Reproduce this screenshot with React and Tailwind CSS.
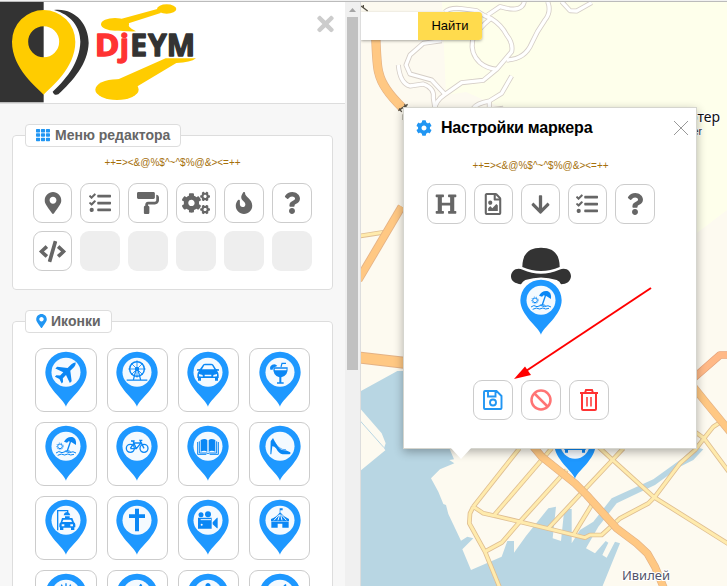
import React from "react";
import {
  FaMapMarkerAlt, FaTasks, FaPaintRoller, FaCogs, FaFire, FaQuestion, FaCode,
  FaHeading, FaRegFileImage, FaArrowDown, FaTh, FaCog, FaTimes,
} from "react-icons/fa";

const BLUE = "#1e98ff";
const ICON = "#0a87f5";

/* Glyphs are centred on 0,0; the pin head has an inner radius of 43 units. */
const glyphs = {
  plane: (
    <path transform="rotate(45) scale(.96)" d="M0-43Q5-39 6-30V-13L32 7V15L6 6V20L15 28V34L0 29L-15 34V28L-6 20V6L-32 15V7L-6-13V-30Q-5-39 0-43Z" />
  ),
  wheel: (
    <g fill="none" stroke={ICON} strokeWidth="3">
      <circle cy="-10" r="22" strokeWidth="4.5" />
      <circle cy="-10" r="5" fill={ICON} />
      <path d="M0-36V16M-26-10H26M-17-27L17 7M17-27L-17 7" strokeWidth="2.5" />
      <path d="M-4-4L-11 23M4-4L11 23M-31 23.500H31" strokeWidth="3.500" />
    </g>
  ),
  car: (
    <g>
      <path fillRule="evenodd" d="M-33-9L-24-10L-15-23Q-13-26-8-26H9Q14-26 16-23L24-10L33-9V-5H27Q32 0 32 8V17H30V25H21V17H-21V25H-30V17H-32V8Q-32 0-27-5H-33ZM-18-9H19L12-21H-11ZM-27 5V12L-16 13V8ZM27 5V12L16 13V8ZM-10 7V12H10V7Z" />
    </g>
  ),
  cocktail: (
    <g>
      <path fillRule="evenodd" d="M-20-15H23Q25 10 4 15V30H11V34H-9V30H-2V15Q-22 10-20-15ZM-16-11Q-16-7-15-6H19L20-11Z" />
      <path d="M3-16L6-27H18" fill="none" stroke={ICON} strokeWidth="3.500" />
      <path d="M-29-8A12 12 0 0 1-8-19L-17-15A7 7 0 0 0-22-8Z" />
    </g>
  ),
  beach: (
    <g>
      <path d="M-6-14Q2-30 19-28Q32-25 30-4L17-12L8-15L3-11Z" />
      <path d="M14-16L4 13" stroke={ICON} strokeWidth="4" />
      <circle cx="-18" r="7" fill="none" stroke={ICON} strokeWidth="3" />
      <circle cx="-18" r="10" fill="none" stroke={ICON} strokeWidth="2.500" strokeDasharray="3 4" />
      <path d="M-30 20Q-22 12-12 19Q0 12 10 19Q22 13 30 20M-25 27Q-14 20-4 26Q6 20 14 26L24 24" fill="none" stroke={ICON} strokeWidth="3" />
      <path d="M-6 15Q4 8 16 16Z" />
    </g>
  ),
  bike: (
    <g fill="none" stroke={ICON} strokeWidth="4">
      <circle cx="-20" cy="6" r="12" /><circle cx="21" cy="6" r="12" />
      <path d="M-20 6L-9-10H12L-2 7H-20M-2 7L-12-16M-18-16H-7M21 6L9-18H16" strokeWidth="4" />
    </g>
  ),
  book: (
    <g>
      <path d="M-22-19Q-8-25-2-18V17Q-10 10-22 16ZM22-19Q8-25 2-18V17Q10 10 22 16Z" />
      <path d="M-26-15V20H-3Q0 24 3 20H26V-15M-31-13V24H-5M31-13V24H5" fill="none" stroke={ICON} strokeWidth="3" />
    </g>
  ),
  shoe: (
    <g>
      <path d="M-28-15L-21-25Q-6 7 6 11Q20 11 31 18Q33 22 29 24H8Q-3 23-12 6Q-18-1-23 0L-26 24H-29Z" />
      <path d="M-17-14Q-7 6 7 9L18 10" fill="none" stroke={ICON} strokeWidth="2" />
    </g>
  ),
  wash: (
    <g>
      <path d="M-25 30V-29H5V-20" fill="none" stroke={ICON} strokeWidth="4" />
      <path d="M-7-15Q-5-25 4-25Q11-24 13-15ZM-3-12H11V-7H-3Z" />
      <path fillRule="evenodd" d="M-12-7H19L24 6Q28 8 28 13V21H25V29H15V22H-8V29H-18V21H-20V13Q-20 8-16 6ZM-8-2L-11 5H18L15-2ZM-13 12V18H-5V12ZM13 12V18H21V12Z" />
    </g>
  ),
  cross: <path d="M-6-35H6V-18H24V-7H6V33H-6V-7H-24V-18H-6Z" />,
  camera: (
    <g>
      <circle cx="-21" cy="-17" r="7.500" /><circle cy="-18" r="9" />
      <path d="M-30-8H11V25H-30ZM14 6L27-8H29V24H27L14 12Z" />
      <path d="M-22-2H9" stroke="#f4faff" strokeWidth="3" /><circle cx="-19" cy="13" r="3" fill="#f4faff" />
    </g>
  ),
  circus: (
    <g>
      <path d="M-1-36H8V-30H1V-25H-1Z" />
      <path d="M0-25Q10-11 27-4V3H-27V-4Q-9-10 0-25ZM-26 4H26V22H7V10H-7V22H-26Z" />
      <path d="M-3-17L-18 0M-1-17L-6 0M2-17L6 0M4-17L19 0" stroke="#f4faff" strokeWidth="3" />
    </g>
  ),
  sun: <g stroke={ICON} strokeWidth="4"><path d="M0-33V-18M-14-29L-8-17M14-29L8-17M-25-18L-16-10M25-18L16-10" /><circle r="12" /></g>,
  guitar: <path d="M10-32L16-28L7-12Q15 5-5 17Q-23 20-18 2L1-14Z" />,
  flower: <path d="M-8-28Q0-40 8-28L5-20L15-12L8 14H-8L-15-12L-5-20Z" />,
  rocket: <path d="M5-20L16-31L19-29L17-14L0 12L-15 5Z" />,
};

function Pin({ kind, className = "" }) {
  return (
    <svg className={`block h-[56px] w-[42px] shrink-0 ${className}`} viewBox="-63 -64 126 168">
      <path d="M0 103C-6 82-62 45-62 0A62 62 0 0 1 62 0C62 45 6 82 0 103Z" fill={BLUE} />
      <circle r="43.500" fill="#f4faff" />
      <g fill={ICON} color={ICON}>{glyphs[kind]}</g>
    </svg>
  );
}

function Tool({ children, className = "w-10" }) {
  return (
    <div className={`flex h-10 shrink-0 items-center justify-center rounded-[9px] border border-[#ccc] bg-white text-[#666] ${className}`}>
      {children}
    </div>
  );
}

function Logo() {
  return (
    <svg className="block h-[102px] w-[240px]" viewBox="0 5 720 306">
      <rect y="5" width="131" height="301" fill="#333" />
      <path fillRule="evenodd" fill="#ffcc00" d="M131 283C112 262 36 205 36 124A95 95 0 0 1 226 124C226 205 150 262 131 283ZM131 78A46.500 46.500 0 1 0 131 171A46.500 46.500 0 1 0 131 78Z" />
      <path fill="#333" d="M162 29C225 22 266 72 266 128C264 190 220 240 175 282Q162 287 158 274C205 230 239 183 241 124C241 80 213 43 162 29Z" />
      <g fill="#ffcc00">
        <ellipse cx="500" cy="26" rx="29" ry="14" />
        <ellipse cx="345" cy="72" rx="42" ry="19" />
        <path d="M365 55L480 24L482 38L386 69Q380 80 408 93Q370 94 340 88Z" />
        <ellipse cx="351" cy="268" rx="65" ry="31" />
        <path d="M350 239L497 174H588Q572 187 529 188L415 256L390 280Z" />
      </g>
      <g fontFamily="Open Sans, sans-serif" fontWeight="700" fontSize="90" strokeWidth="4" strokeLinejoin="round">
        <text x="284" y="166" fill="#ff3333" stroke="#ff3333" textLength="74" lengthAdjust="spacingAndGlyphs">D</text>
        <text x="359" y="166" fill="#ff3333" stroke="#ff3333">j</text>
        <text x="391 444 500" y="166" fill="#333" stroke="#333">EYM</text>
      </g>
    </svg>
  );
}

const whiteRoads = [
  "M300 36Q315 22 350 26L395 32Q420 50 438 55Q470 75 485 105Q505 130 500 155L455 208L415 241L350 248L300 283Q268 305 270 330",
  "M428 45L465 20Q530 40 538 5",
  "M608 5Q620 35 600 60Q575 95 560 130Q540 178 485 180",
  "M438 55Q400 85 383 120Q375 160 405 188Q425 205 455 208",
  "M290 122L235 130L195 165L183 195L195 222L260 240L300 283",
  "M160 195Q165 250 195 258L235 252Q270 265 265 295L270 325",
  "M500 228L470 280L433 303Q395 310 385 325M433 303V330L475 325",
  "M650 5L675 32L695 33L740 8",
];
const yellowRoads = [
  "M340 440L478 265", "M403 465L575 265", "M478 487L620 330", "M565 505L665 398L760 297L790 265", "M640 525L695 435",
  "M340 440L370 460L403 467L560 505L675 533L690 525L725 525L780 475L865 430L885 410L960 310L1005 270L1032 235L1060 200L1087 183",
  "M340 440L330 460L328 490L375 575L420 685", "M375 575L425 548L478 487", "M715 260L755 297L880 410L1110 555", "M1000 212L1032 235L1110 340",
  "M0 -372L70 -383",
];
const orangeRoads = [
  "M520 260L545 290L645 370L680 405L770 505L830 550L862 580L885 620L912 685",
  "M1000 80L1040 130L1110 215",
];

function CityMap() {
  return (
    <svg className="absolute inset-0 h-full w-full" viewBox="361 2 366 584">
      <rect x="361" y="2" width="366" height="584" fill="#fdfaf0" />
      <path d="M442 2H727V210L697 233H640V107H500L466 92L446 95Z" fill="#feffeb" />
      <g transform="translate(345 0) scale(.33333)" fill="none" strokeLinejoin="round">
        <g stroke="#d5cec7" strokeWidth="15">{whiteRoads.map((d) => <path key={d} d={d} />)}</g>
        <g stroke="#fff" strokeWidth="10">{whiteRoads.map((d) => <path key={d} d={d} />)}</g>
        <path d="M92 100Q95 200 102 220Q112 265 172 323" stroke="#e4b285" strokeWidth="28" />
        <path d="M92 100Q95 200 102 220Q112 265 172 323" stroke="#ffc883" strokeWidth="24" />
        <path d="M160 332L188 313M163 325L170 336M178 313L185 323M48 18L68 33M55 15V25M175 343V360" stroke="#555044" strokeWidth="4" />
      </g>
      <g transform="translate(360 360) scale(.33333)">
        <path fill="#b8d6e3" d="M0 95L112 33H150V265H268L282 298L268 300L283 310L240 328L213 355L235 395L250 432L258 435L265 462L303 542L322 530L340 535L307 568L333 630L425 590L442 543H462V578L498 528L565 445L588 440L578 535L603 543L613 447H635V550L660 510L700 485L755 415L880 358L960 300L1010 262L1030 268L1000 300L960 320L885 375L770 430L715 500L678 565L705 580L737 543L745 548L727 585L740 593L765 545L780 550L727 680H0Z" />
        <path fill="#fdfaf0" d="M0 145L65 220L77 250L72 265L76 271L0 333Z" />
        <path d="M0 182L72 263" stroke="#b8d6e3" strokeWidth="3" />
        <g fill="none" strokeLinejoin="round">
          <g stroke="#dfbe91" strokeWidth="14">{yellowRoads.map((d) => <path key={d} d={d} />)}</g>
          <g stroke="#ffebad" strokeWidth="9">{yellowRoads.map((d) => <path key={d} d={d} />)}</g>
          <path d="M0 -7L145 10" stroke="#e4b285" strokeWidth="36" />
          <path d="M0 -7L145 10" stroke="#ffc883" strokeWidth="30" />
          <path d="M-5 -240L125 -460" stroke="#e4b285" strokeWidth="25" />
          <path d="M-5 -240L125 -460" stroke="#ffc883" strokeWidth="20" />
          <path d="M1000 55L1080 -15H1110" stroke="#e4a27b" strokeWidth="23" />
          <path d="M1000 55L1080 -15H1110" stroke="#ffb987" strokeWidth="19" />
          <g stroke="#e4b285" strokeWidth="24">{orangeRoads.map((d) => <path key={d} d={d} />)}</g>
          <g stroke="#ffc883" strokeWidth="20">{orangeRoads.map((d) => <path key={d} d={d} />)}</g>
        </g>
      </g>
      <g fontFamily="Noto Sans, sans-serif" paintOrder="stroke" stroke="#fff" strokeWidth="2">
        <text x="720" y="122" textAnchor="end" fontSize="14" fill="#111">отер</text>
        <text x="702" y="135" textAnchor="end" fontSize="10.500" fontFamily="Liberation Sans, sans-serif" fill="#333">er</text>
        <text x="622" y="580" fontSize="13" textLength="48" fill="#55556b">Ивилей</text>
      </g>
    </svg>
  );
}

function Divider() {
  return <div className="text-center text-[10px] leading-3 whitespace-nowrap text-[#a5700c]">{"++=><&@%$^~^$%@&><=++"}</div>;
}

function Legend({ children, className }) {
  return (
    <legend className={`ml-3 flex h-[23px] items-center rounded-[4px] border border-[#ddd] bg-white pb-px pl-[10px] text-[14px] leading-none font-bold whitespace-nowrap text-[#666] ${className}`}>
      {children}
    </legend>
  );
}

const pins = ["plane", "wheel", "car", "cocktail", "beach", "bike", "book", "shoe", "wash", "cross", "camera", "circus", "sun", "guitar", "flower", "rocket"];

function Sidebar() {
  return (
    <aside className="flex w-[345px] shrink-0 flex-col overflow-hidden bg-[#f7f7f7]">
      <header className="flex h-[102px] shrink-0 justify-between border-b border-[#ddd] bg-white">
        <Logo />
        <FaTimes className="mt-[10px] mr-[9px] h-[24px] w-[21px] text-[#ccc]" />
      </header>
      <fieldset className="mt-5 ml-3 h-[166px] w-[321px] shrink-0 rounded-[4px] border border-[#ddd] bg-white">
        <Legend className="w-[156px]">
          <FaTh className="mr-[5px] h-[14px] w-[14px] text-[#2196f3]" />Меню редактора
        </Legend>
        <div className="pt-[10px]"><Divider /></div>
        <div className="mt-[14px] flex gap-2 pl-5">
          <Tool className="w-[39px]"><FaMapMarkerAlt size={22} /></Tool>
          <Tool><FaTasks size={22} /></Tool>
          <Tool><FaPaintRoller size={22} /></Tool>
          <Tool><FaCogs size={28} /></Tool>
          <Tool><FaFire size={22} /></Tool>
          <Tool><FaQuestion size={22} /></Tool>
        </div>
        <div className="mt-2 flex gap-2 pl-5">
          <Tool className="w-[39px]"><FaCode size={27} /></Tool>
          {[1, 2, 3, 4, 5].map((n) => <div key={n} className="h-10 w-10 rounded-[9px] bg-[#eee]" />)}
        </div>
      </fieldset>
      <fieldset className="mt-5 ml-3 h-[360px] w-[321px] shrink-0 rounded-[4px] border border-[#ddd] bg-white">
        <Legend className="w-[87px]">
          <FaMapMarkerAlt className="mr-[4px] h-[14px] w-[11px] text-[#2196f3]" />Иконки
        </Legend>
        <div className="grid w-[297.3px] grid-cols-4 gap-[10px] pt-[15px] pl-[22.4px]">
          {pins.map((kind) => (
            <div key={kind} className="flex h-16 justify-center rounded-[9px] border border-[#ccc] bg-white pt-[2.4px]">
              <Pin kind={kind} />
            </div>
          ))}
        </div>
      </fieldset>
    </aside>
  );
}

function Scrollbar() {
  return (
    <div className="flex w-4 shrink-0 flex-col items-center border-r border-[#ddd] bg-[#f0f0f0]">
      <svg className="h-[15px] w-[15px] shrink-0" viewBox="0 0 15 15"><path d="M4 10L7.500 6L11 10Z" fill="#a5a5a5" /></svg>
      <div className="h-[353px] w-[11px] bg-[#c1c1c1]" />
    </div>
  );
}

function Balloon() {
  return (
    <section className="absolute top-[105px] left-[42px] h-[342px] w-[294px] border border-[#d5d5ce] bg-white shadow-[0_3px_9px_rgba(0,0,0,0.3)]">
      <div className="flex h-[40px] items-center">
        <FaCog className="ml-3 h-4 w-4 text-[#2196f3]" />
        <h1 className="ml-[9px] grow text-[16px] leading-none font-bold tracking-[-0.2px] text-black">Настройки маркера</h1>
        <svg className="mr-[7px] h-4 w-4" viewBox="0 0 16 16"><path d="M1 1L15 15M15 1L1 15" stroke="#999" strokeWidth="1" /></svg>
      </div>
      <div className="flex w-[273px] flex-col items-center">
        <div className="pt-[12px]"><Divider /></div>
        <div className="mt-[12px] flex gap-2">
          <Tool className="w-[39px]"><FaHeading size={22} /></Tool>
          <Tool className="w-[39px]"><FaRegFileImage size={22} /></Tool>
          <Tool className="w-[39px]"><FaArrowDown size={21} /></Tool>
          <Tool className="w-[39px]"><FaTasks size={22} /></Tool>
          <Tool><FaQuestion size={22} /></Tool>
        </div>
        <svg className="mt-[23px] h-[38px] w-[62px]" viewBox="150 50 186 114" fill="#333">
          <path d="M187 110C187 72 205 52 243 52S299 72 299 110Q243 134 187 110Z" />
          <path d="M188 118Q243 142 298 118C320 110 333 123 333 138C332 153 320 162 303 162Q300 153 290 149Q243 134 196 149Q188 153 183 162C165 160 153 152 153 138C153 123 168 110 188 118Z" />
        </svg>
        <Pin kind="beach" className="-mt-[6px]" />
        <div className="mt-[45px] flex gap-2">
          <Tool>
            <svg className="h-[22px] w-[22px]" viewBox="0 0 22 22" fill="none" stroke="#2196f3" strokeWidth="1.900">
              <path d="M3 2H14.500L19.500 7V19Q19.500 20 18.500 20H3Q2 20 2 19V3Q2 2 3 2ZM6 2V7.500H13.500V2" /><circle cx="11" cy="13.500" r="3" />
            </svg>
          </Tool>
          <Tool>
            <svg className="h-[22px] w-[22px]" viewBox="0 0 22 22" fill="none" stroke="#ff7474" strokeWidth="2.500"><circle cx="11" cy="11" r="9.500" /><path d="M4.500 4.500L17.500 17.500" /></svg>
          </Tool>
          <Tool>
            <svg className="h-[24px] w-[20px]" viewBox="0 0 20 24" fill="none" stroke="#f33" strokeWidth="2">
              <path d="M1 5H19M3 5V21Q3 22 4 22H16Q17 22 17 21V5M6 5L7 2H13L14 5" /><path d="M8 9V18.500M12 9V18.500" strokeWidth="1.500" />
            </svg>
          </Tool>
        </div>
      </div>
    </section>
  );
}

export default function App() {
  return (
    <div className="h-[586px] w-[727px] overflow-hidden bg-[#f2f2f2] pt-px font-['Liberation_Sans',Arial,sans-serif]">
      <div className="relative flex h-[585px] border-t border-[#bbb]">
        <Sidebar />
        <Scrollbar />
        <main className="relative grow overflow-hidden">
          <CityMap />
          <div className="relative mt-[10px] flex h-7 w-[121px] rounded-r-[3px] bg-white shadow-[0_1px_3px_rgba(0,0,0,0.35)]">
            <div className="grow" />
            <button className="w-16 rounded-r-[3px] bg-[#ffdb4d] text-[13px] text-black">Найти</button>
          </div>
          <Pin kind="car" className="absolute top-[421px] left-[193px]" />
          <Balloon />
          <svg className="absolute top-[445px] left-[89px] h-[13px] w-[22px]" viewBox="0 0 22 13"><path d="M0 0H22L11 12Z" fill="#fff" /></svg>
          <svg className="absolute top-[280px] left-[149px] h-[105px] w-[147px]" viewBox="0 0 147 105">
            <path d="M141 6L16 89" stroke="#f00" strokeWidth="2" /><path d="M4 97L15 84.500L21 93Z" fill="#f00" />
          </svg>
        </main>
      </div>
    </div>
  );
}
